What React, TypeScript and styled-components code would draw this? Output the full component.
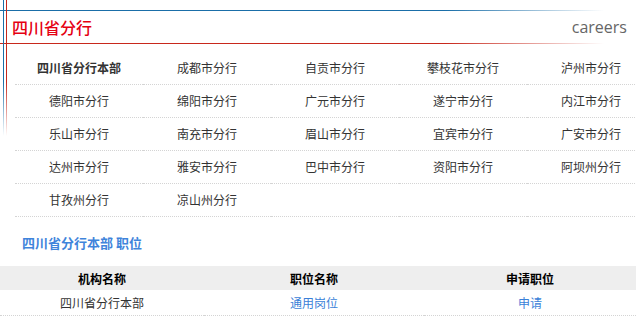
import styled, { createGlobalStyle } from "styled-components";

const branches = [
  "四川省分行本部", "成都市分行", "自贡市分行", "攀枝花市分行", "泸州市分行",
  "德阳市分行", "绵阳市分行", "广元市分行", "遂宁市分行", "内江市分行",
  "乐山市分行", "南充市分行", "眉山市分行", "宜宾市分行", "广安市分行",
  "达州市分行", "雅安市分行", "巴中市分行", "资阳市分行", "阿坝州分行",
  "甘孜州分行", "凉山州分行", "", "", "",
];

const GlobalStyle = createGlobalStyle`
  html, body {
    margin: 0;
    padding: 0;
    background: #fff;
  }
  body {
    font-family: "Noto Sans CJK SC", "Microsoft YaHei", sans-serif;
    overflow: hidden;
  }
`;

const App: React.FC = () => {
  return (
    <Page>
      <GlobalStyle />
      <SideLines>
        <VLine $color="#1a6ea8" />
        <VLine $color="#c8281c" />
      </SideLines>

      <Header>
        <HLine $color="#1a6ea8" />
        <TitleRow>
          <Title>四川省分行</Title>
          <Careers>careers</Careers>
        </TitleRow>
        <HLine $color="#c8281c" />
      </Header>

      <BranchGrid>
        {branches.map((name, i) => (
          <BranchCell key={i} $bold={i === 0}>
            {name}
          </BranchCell>
        ))}
      </BranchGrid>

      <SectionTitle>四川省分行本部 职位</SectionTitle>

      <JobTable>
        <thead>
          <tr>
            <Th style={{ width: 204 }}>机构名称</Th>
            <Th style={{ width: 220 }}>职位名称</Th>
            <Th>申请职位</Th>
          </tr>
        </thead>
        <tbody>
          <tr>
            <Td>四川省分行本部</Td>
            <Td><LinkText>通用岗位</LinkText></Td>
            <Td><LinkText>申请</LinkText></Td>
          </tr>
        </tbody>
      </JobTable>
    </Page>
  );
};

const Page = styled.div`
  position: relative;
  width: 636px;
  height: 324px;
  overflow: hidden;
`;

const SideLines = styled.div`
  position: absolute;
  top: 0;
  left: 3px;
  display: flex;
  gap: 2px;
  height: 136px;
  z-index: 2;
`;

const VLine = styled.div<{ $color: string }>`
  width: 1px;
  height: 100%;
  background: linear-gradient(to bottom, ${(p) => p.$color} 0%, ${(p) => p.$color} 60%, rgba(255, 255, 255, 0) 100%);
`;

const Header = styled.div`
  padding-top: 10px;
`;

const HLine = styled.div<{ $color: string }>`
  height: 1px;
  width: 100%;
  background: linear-gradient(to right, ${(p) => p.$color} 0%, ${(p) => p.$color} 70%, rgba(255, 255, 255, 0) 95%);
`;

const TitleRow = styled.div`
  height: 32px;
  display: flex;
  align-items: center;
  justify-content: space-between;
  padding: 0 9px 0 12px;
`;

const Title = styled.h1`
  margin: 0;
  font-size: 16px;
  font-weight: 500;
  color: #e50012;
  line-height: 1;
`;

const Careers = styled.span`
  font-family: "Open Sans", "Liberation Sans", sans-serif;
  font-size: 16px;
  color: #666;
  line-height: 1;
`;

const BranchGrid = styled.div`
  display: grid;
  grid-template-columns: repeat(5, 128px);
  margin: 8px 0 0 15px;
`;

const BranchCell = styled.div<{ $bold?: boolean }>`
  height: 32px;
  line-height: 32px;
  text-align: center;
  font-size: 12px;
  color: #333;
  font-weight: ${(p) => (p.$bold ? 700 : 400)};
  border-bottom: 1px dotted #d4d4d4;
`;

const SectionTitle = styled.h2`
  margin: 16px 0 0 22px;
  font-size: 13px;
  font-weight: 700;
  color: #3f84db;
  line-height: 20px;
`;

const JobTable = styled.table`
  width: 636px;
  margin-top: 13px;
  border-collapse: collapse;
  font-size: 12px;
`;

const Th = styled.th`
  height: 24px;
  padding: 0;
  background: #eee;
  color: #000;
  font-weight: 700;
  text-align: center;
`;

const Td = styled.td`
  height: 25px;
  padding: 0;
  color: #333;
  text-align: center;
  border-bottom: 1px dotted #d4d4d4;
`;

const LinkText = styled.span`
  color: #3a7fd8;
`;

export default App;
